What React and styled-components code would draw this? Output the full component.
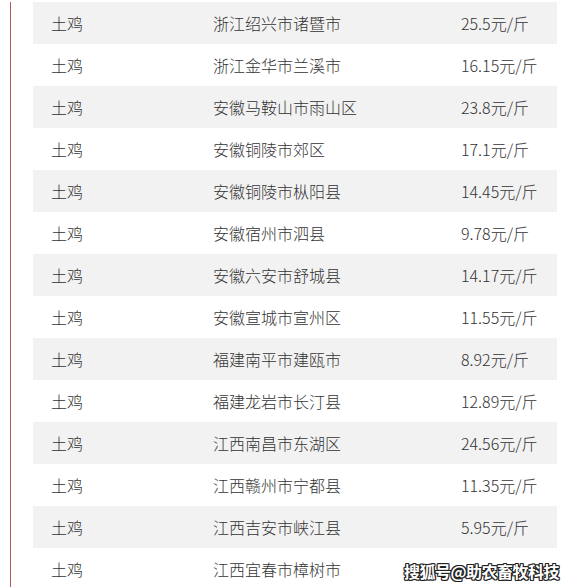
import React from "react";
import styled, { createGlobalStyle } from "styled-components";

const Global = createGlobalStyle`
  html, body { margin: 0; padding: 0; background: #fff; }
  body { font-family: "Noto Sans CJK SC", "Noto Sans", sans-serif; overflow: hidden; }
`;

const Page = styled.div`
  position: relative;
  width: 573px;
  height: 587px;
  overflow: hidden;
  box-sizing: border-box;
  padding-top: 2px;
`;

const Frame = styled.div`
  margin-left: 10px;
  border-left: 1px solid #b4585a;
  padding-left: 22px;
  height: 100%;
  box-sizing: border-box;
`;

const Table = styled.div`
  width: 524px;
  display: flex;
  flex-direction: column;
`;

const Row = styled.div`
  display: grid;
  grid-template-columns: 162px 245px 1fr;
  height: 42px;
  align-items: center;
  background: ${(p) => (p.$shaded ? "#f2f2f2" : "#fff")};
`;

const Cell = styled.div`
  padding-left: ${(p) => p.$pad || 18}px;
  font-size: 16px;
  font-weight: 300;
  color: #333;
  white-space: nowrap;
  line-height: 1;
  letter-spacing: ${(p) => p.$ls || 0}px;
`;

const Watermark = styled.div`
  position: absolute;
  left: 404px;
  top: 559px;
  font-size: 16px;
  font-weight: 700;
  color: #fff;
  letter-spacing: -0.5px;
  white-space: nowrap;
  text-shadow: 1px 0 0 #222, -1px 0 0 #222, 0 1px 0 #222, 0 -1px 0 #222,
    1px 1px 0 #222, -1px -1px 0 #222, 1px -1px 0 #222, -1px 1px 0 #222;
`;

const rows = [
  ["浙江绍兴市诸暨市", "25.5元/斤"],
  ["浙江金华市兰溪市", "16.15元/斤"],
  ["安徽马鞍山市雨山区", "23.8元/斤"],
  ["安徽铜陵市郊区", "17.1元/斤"],
  ["安徽铜陵市枞阳县", "14.45元/斤"],
  ["安徽宿州市泗县", "9.78元/斤"],
  ["安徽六安市舒城县", "14.17元/斤"],
  ["安徽宣城市宣州区", "11.55元/斤"],
  ["福建南平市建瓯市", "8.92元/斤"],
  ["福建龙岩市长汀县", "12.89元/斤"],
  ["江西南昌市东湖区", "24.56元/斤"],
  ["江西赣州市宁都县", "11.35元/斤"],
  ["江西吉安市峡江县", "5.95元/斤"],
  ["江西宜春市樟树市", ""],
];

export default function App() {
  return (
    <Page>
      <Global />
      <Frame>
        <Table>
          {rows.map(([place, price], i) => (
            <Row key={i} $shaded={i % 2 === 0}>
              <Cell>土鸡</Cell>
              <Cell>{place}</Cell>
              <Cell $pad={21}>{price}</Cell>
            </Row>
          ))}
        </Table>
      </Frame>
      <Watermark>搜狐号@助农畜牧科技</Watermark>
    </Page>
  );
}
